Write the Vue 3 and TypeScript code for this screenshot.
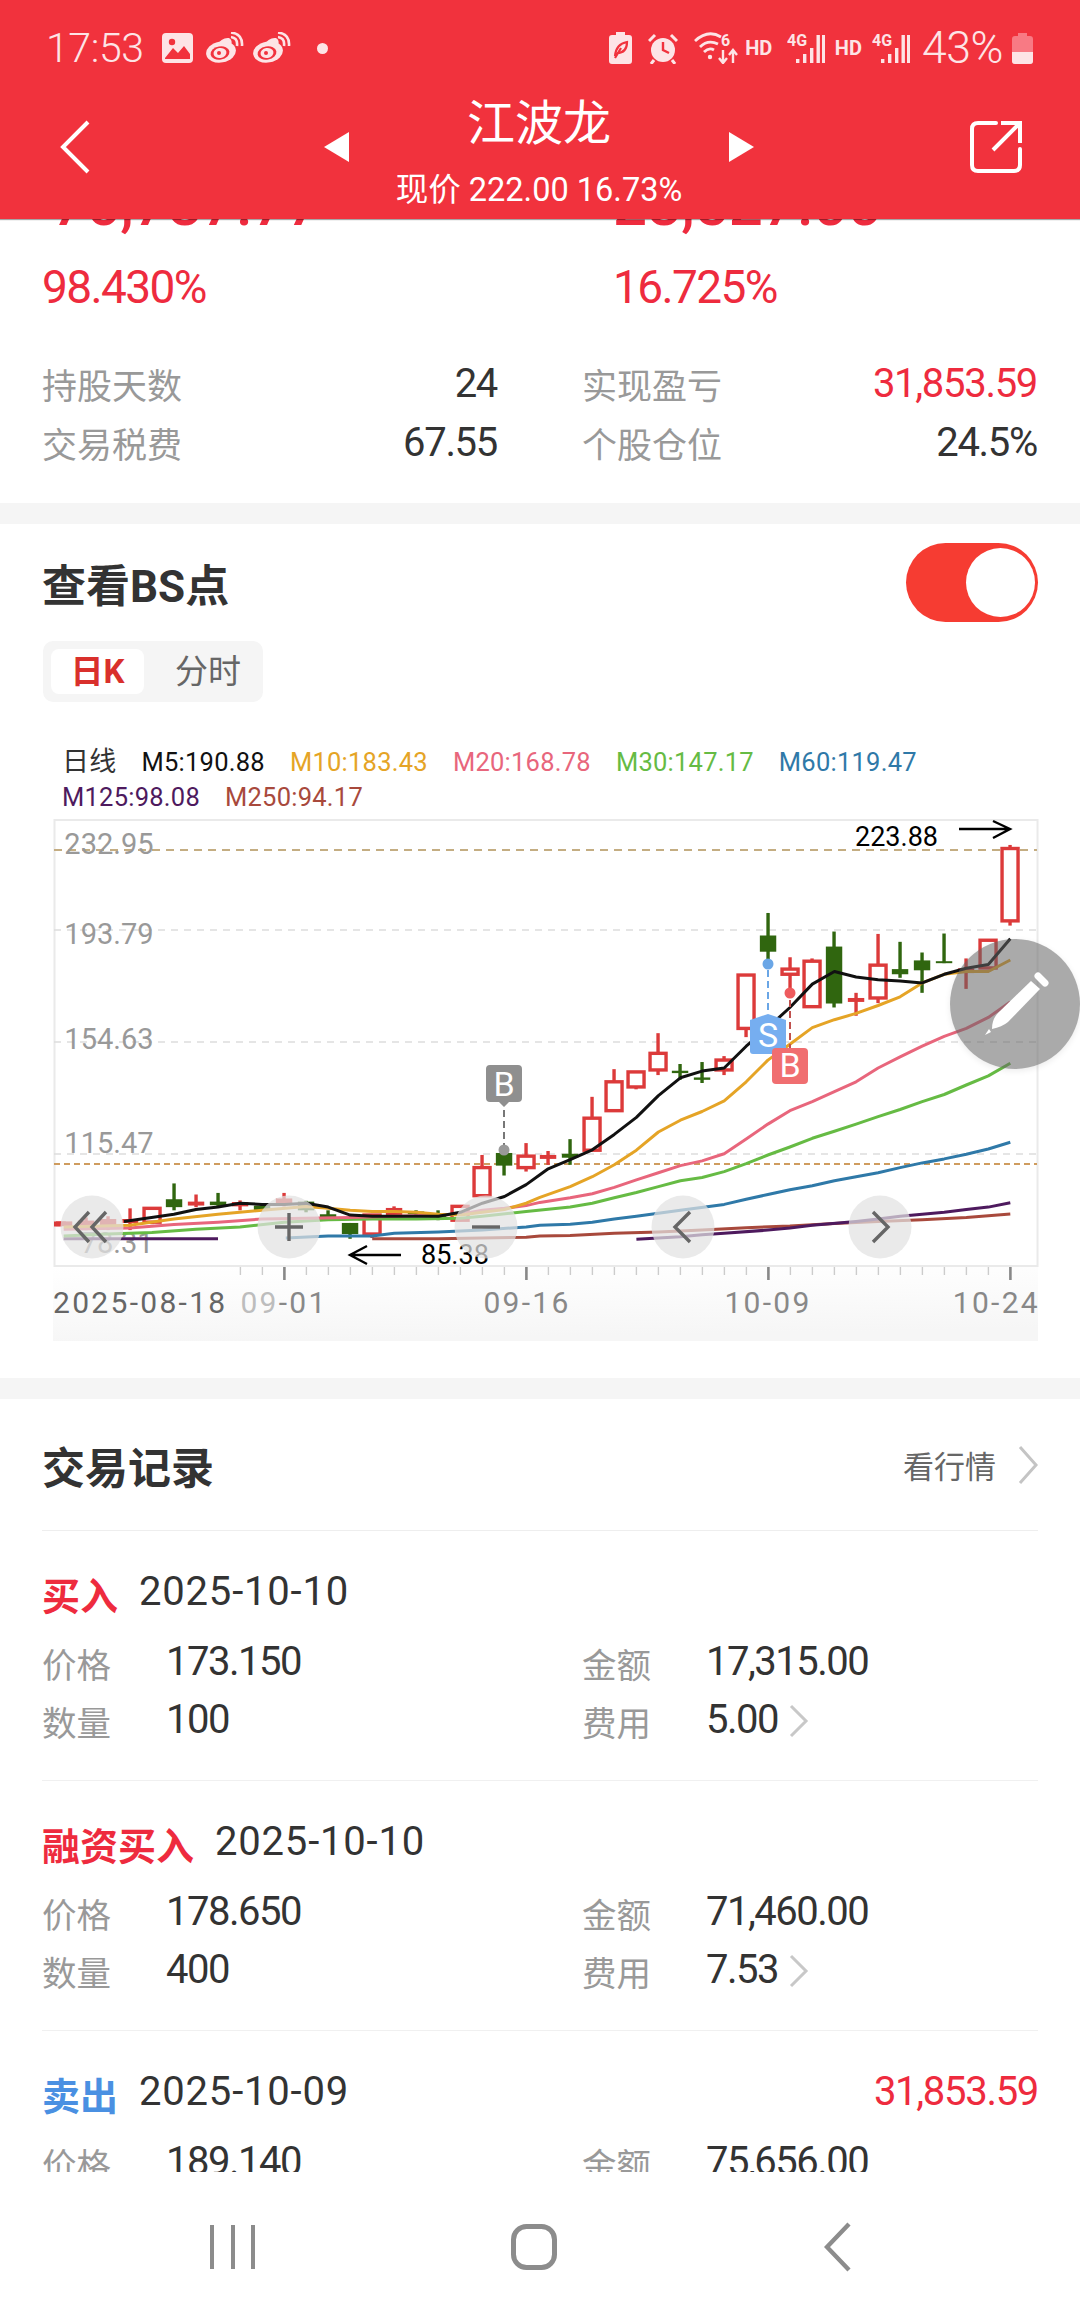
<template>
  <div class="phone">
    <header class="top">
      <div class="status">
        <span class="clock">17:53</span>
        <svg class="st-gallery" width="31" height="30" viewBox="0 0 31 30">
          <rect width="31" height="30" rx="4" fill="#fde4e6" />
          <circle cx="10" cy="9" r="3.2" fill="#f1323d" />
          <path d="M3 25 L11 15 L16 20 L22 13 L28 21 V26 H3 Z" fill="#f1323d" />
        </svg>
        <svg v-for="n in 2" :key="n" class="st-weibo" width="38" height="32" viewBox="0 0 38 32">
          <ellipse cx="15" cy="20" rx="15" ry="10.5" transform="rotate(-10 15 20)" fill="#fde4e6" />
          <path d="M10 14 Q16 5 23 6 Q27 8 25 14 Z" fill="#fde4e6" />
          <ellipse cx="14" cy="21" rx="9.5" ry="6.6" transform="rotate(-10 14 21)" fill="#f1323d" />
          <ellipse cx="14" cy="21" rx="6.5" ry="5" transform="rotate(-10 14 21)" fill="#fde4e6" />
          <circle cx="13" cy="21" r="2" fill="#f1323d" />
          <path d="M25 5 Q32 6 31 14 M25 0.5 Q37 2 36 14" fill="none" stroke="#fde4e6" stroke-width="2.6" />
        </svg>
        <i class="st-dot"></i>
        <span class="st-gap"></span>
        <svg width="23" height="32" viewBox="0 0 23 32">
          <path d="M7 0 H16 V3 H20 Q23 3 23 6 V29 Q23 32 20 32 H3 Q0 32 0 29 V6 Q0 3 3 3 H7 Z" fill="#fde4e6" />
          <path d="M6 24 Q7 12 18 10 Q18 21 8 21 M6 26 L12 16" fill="none" stroke="#f1323d" stroke-width="2.2" />
        </svg>
        <svg class="ml16" width="30" height="31" viewBox="0 0 30 31">
          <circle cx="15" cy="17" r="12" fill="#fde4e6" />
          <path d="M1 8 L7 2 M29 8 L23 2 M6 27 L3 31 M24 27 L27 31" stroke="#fde4e6" stroke-width="3" />
          <path d="M15 9 V17 L21 20" fill="none" stroke="#f1323d" stroke-width="2.4" />
        </svg>
        <svg class="ml16" width="44" height="32" viewBox="0 0 44 32">
          <path d="M1 9 Q14 -3 27 5 M6 15 Q14 7 24 12 M10 20 Q15 15 20 18" fill="none" stroke="#fde4e6" stroke-width="2.8" />
          <circle cx="16" cy="25" r="2.2" fill="#fde4e6" />
          <text x="27" y="14" class="st-mini">6</text>
          <path d="M29 18 V30 M25 26 L29 31 L33 26 M39 31 V19 M35 23 L39 18 L43 23" fill="none" stroke="#fde4e6" stroke-width="2.4" />
        </svg>
        <span class="st-hd hd-a">HD</span>
        <svg class="ml15" width="38" height="32" viewBox="0 0 38 32">
          <text x="0" y="14" class="st-mini">4G</text>
          <rect x="9" y="27" width="3.4" height="4" fill="#fde4e6" />
          <rect x="16" y="22" width="3.4" height="9" fill="#fde4e6" />
          <rect x="23" y="16" width="3.4" height="15" fill="#fde4e6" />
          <rect x="29.5" y="3" width="3.4" height="28" fill="#fde4e6" />
          <rect x="35" y="3" width="3" height="28" fill="#fde4e6" />
        </svg>
        <span class="st-hd hd-b">HD</span>
        <svg class="sig-b" width="38" height="32" viewBox="0 0 38 32">
          <text x="0" y="14" class="st-mini">4G</text>
          <rect x="9" y="27" width="3.4" height="4" fill="#fde4e6" />
          <rect x="16" y="22" width="3.4" height="9" fill="#fde4e6" />
          <rect x="23" y="16" width="3.4" height="15" fill="#fde4e6" />
          <rect x="29.5" y="3" width="3.4" height="28" fill="#fde4e6" />
          <rect x="35" y="3" width="3" height="28" fill="#fde4e6" />
        </svg>
        <span class="clock batt-pct">43%</span>
        <svg class="batt" width="21" height="31" viewBox="0 0 21 31">
          <path d="M6 0 H15 V3 H18 Q21 3 21 6 V28 Q21 31 18 31 H3 Q0 31 0 28 V6 Q0 3 3 3 H6 Z" fill="#f87a84" />
          <path d="M0 19 H21 V28 Q21 31 18 31 H3 Q0 31 0 28 Z" fill="#fde4e6" />
        </svg>
      </div>
      <div class="nav">
        <svg class="nav-icon" width="30" height="54" viewBox="0 0 30 54">
          <path d="M28 2 L3 27 L28 52" fill="none" stroke="#fff" stroke-width="4" />
        </svg>
        <div class="nav-center">
          <i class="tri tri-l"></i>
          <div class="nav-title">
            <div class="stock-name">江波龙</div>
            <div class="stock-sub">现价 222.00 16.73%</div>
          </div>
          <i class="tri tri-r"></i>
        </div>
        <svg class="nav-icon" width="54" height="54" viewBox="0 0 54 54">
          <path d="M27 3 H9 Q3 3 3 9 V45 Q3 51 9 51 H45 Q51 51 51 45 V29" fill="none" stroke="#fff" stroke-width="4" stroke-linecap="round" />
          <path d="M24 30 L50 4 M32 3 H51 V23" fill="none" stroke="#fff" stroke-width="4" />
        </svg>
      </div>
    </header>

    <main class="scroll">
      <section class="summary">
        <div class="clipped">
          <span class="big-num">76,787.77</span>
          <span class="big-num second">28,527.00</span>
        </div>
        <div class="pcts">
          <span class="pct">98.430%</span>
          <span class="pct second">16.725%</span>
        </div>
        <div class="stats">
          <div v-for="s in stats" :key="s.label" class="stat">
            <span class="stat-label">{{ s.label }}</span>
            <span class="num" :class="{ rise: s.rise }">{{ s.value }}</span>
          </div>
        </div>
      </section>
      <div class="band"></div>

      <section class="bs">
        <div class="bs-head">
          <h2 class="bs-title">查看BS点</h2>
          <div class="toggle"><i class="knob"></i></div>
        </div>
        <div class="tabs">
          <span class="tab active">日K</span>
          <span class="tab">分时</span>
        </div>
        <div class="legend">
          <span class="lg-name">日线</span>
          <span v-for="l in legendTop" :key="l.text" class="lg-item" :style="{ color: l.color }">{{ l.text }}</span>
          <div class="lg-break"></div>
          <span v-for="l in legendBottom" :key="l.text" class="lg-item" :style="{ color: l.color }">{{ l.text }}</span>
        </div>
        <svg class="plot" width="1080" height="522" viewBox="0 819 1080 522">
          <defs>
            <linearGradient id="fade" x1="0" y1="0" x2="0.22" y2="1">
              <stop offset="0" stop-color="#ffffff" />
              <stop offset="0.5" stop-color="#fbfbfb" />
              <stop offset="1" stop-color="#f6f6f6" />
            </linearGradient>
          </defs>
          <rect x="53" y="1266" width="985" height="75" fill="url(#fade)" />
          <rect x="54.5" y="820" width="983" height="446" fill="#fff" stroke="#eaeaea" stroke-width="2" />

          <line v-for="y in [930, 1042, 1154]" :key="y" x1="54" x2="1037" :y1="y" :y2="y" stroke="#ddd" stroke-width="1.4" stroke-dasharray="7 6" />
          <line x1="54" x2="1037" y1="850" y2="850" stroke="#c4ad82" stroke-width="2" stroke-dasharray="8 6" />
          <line x1="54" x2="1037" y1="1164" y2="1164" stroke="#cf9c5e" stroke-width="2" stroke-dasharray="6 4" />

          <text v-for="a in axisLabels" :key="a.text" x="153.5" :y="a.y" class="axis" text-anchor="end">{{ a.text }}</text>

          <line x1="54" x2="62" y1="1224" y2="1224" stroke="#dc3a3a" stroke-width="5" />
          <g v-for="(c, i) in candles" :key="i">
            <line :x1="c.x" :x2="c.x" :y1="c.wt" :y2="c.wb" :stroke="c.color" stroke-width="3.4" />
            <rect v-if="c.up" :x="c.x - 8" :y="c.t" width="16" :height="c.h" fill="#fff" :stroke="c.color" stroke-width="3.4" />
            <rect v-else :x="c.x - 8.2" :y="c.t" width="16.4" :height="c.h" :fill="c.color" />
          </g>

          <polyline v-for="m in maLines" :key="m.color + m.points.length" :points="m.points" fill="none" :stroke="m.color" stroke-width="3" stroke-linejoin="round" />

          <line x1="504" x2="504" y1="1110" y2="1146" stroke="#777" stroke-width="2" stroke-dasharray="7 4" />
          <circle cx="504" cy="1150" r="5.5" fill="#999" />
          <path d="M490 1065 H518 Q522 1065 522 1069 V1098 Q522 1102 518 1102 H509 L504 1107 L499 1102 H490 Q486 1102 486 1098 V1069 Q486 1065 490 1065 Z" fill="#8f8f8f" />
          <text x="504" y="1096" class="tag" text-anchor="middle">B</text>

          <line x1="768" x2="768" y1="970" y2="1014" stroke="#6aa6e6" stroke-width="2" stroke-dasharray="7 4" />
          <circle cx="768" cy="964" r="5.5" fill="#6aa6e6" />
          <line x1="790" x2="790" y1="1000" y2="1048" stroke="#c0504d" stroke-width="2" stroke-dasharray="7 4" />
          <circle cx="790" cy="993" r="5.5" fill="#ee5b5e" />
          <path d="M750 1020 L768 1014 L786 1020 V1051 Q786 1054 783 1054 H753 Q750 1054 750 1051 Z" fill="#76aef0" />
          <text x="768" y="1047" class="tag" text-anchor="middle">S</text>
          <rect x="772" y="1048" width="36" height="36" rx="4" fill="#f06e70" />
          <text x="790" y="1077" class="tag" text-anchor="middle">B</text>

          <text x="938" y="846" class="extreme" text-anchor="end">223.88</text>
          <path d="M959 829 H1009 M993 821 L1010 829 L993 838" fill="none" stroke="#000" stroke-width="2.4" />
          <path d="M401 1255 H350 M367 1246 L350 1255 L367 1264" fill="none" stroke="#000" stroke-width="2.4" />
          <text x="421" y="1264" class="extreme">85.38</text>

          <g v-for="b in chartButtons" :key="b.x">
            <circle :cx="b.x" cy="1227" r="31.5" fill="#e2e2e2" fill-opacity="0.72" />
            <path :d="b.d" :transform="`translate(${b.x} 1227)`" fill="none" stroke="#666" stroke-width="3.4" />
          </g>

          <line v-for="t in ticks" :key="t.x" :x1="t.x" :x2="t.x" y1="1267" :y2="t.major ? 1280 : 1275" :stroke="t.major ? '#888' : '#ccc'" :stroke-width="t.major ? 2.6 : 1.4" />

          <text x="53" y="1313" class="axis-date first">2025-08-18</text>
          <text x="284" y="1313" class="axis-date" text-anchor="middle"><tspan fill="#bdbdbd">09</tspan>-01</text>
          <text x="527" y="1313" class="axis-date" text-anchor="middle">09-16</text>
          <text x="768" y="1313" class="axis-date" text-anchor="middle">10-09</text>
          <text x="1040" y="1313" class="axis-date" text-anchor="end">10-24</text>
        </svg>
      </section>
      <div class="band"></div>

      <section class="trades">
        <div class="trades-head">
          <h2 class="trades-title">交易记录</h2>
          <div class="quote-link">
            <span>看行情</span>
            <svg width="20" height="40" viewBox="0 0 20 40">
              <path d="M2 2 L18 20 L2 38" fill="none" stroke="#c4c4c4" stroke-width="3" />
            </svg>
          </div>
        </div>
        <div v-for="t in trades" :key="t.kind + t.price" class="trade">
          <div class="trade-head">
            <span class="trade-kind" :class="t.side">{{ t.kind }}</span>
            <span class="trade-date">{{ t.date }}</span>
            <span v-if="t.profit" class="trade-profit">{{ t.profit }}</span>
          </div>
          <div class="trade-grid">
            <div class="cell"><span class="cell-label">价格</span><span class="cell-value">{{ t.price }}</span></div>
            <div class="cell"><span class="cell-label">金额</span><span class="cell-value">{{ t.amount }}</span></div>
            <div class="cell"><span class="cell-label">数量</span><span class="cell-value">{{ t.qty }}</span></div>
            <div class="cell">
              <span class="cell-label">费用</span><span class="cell-value">{{ t.fee }}</span>
              <svg class="fee-arrow" width="20" height="34" viewBox="0 0 20 34">
                <path d="M2 2 L17 17 L2 32" fill="none" stroke="#c8c8c8" stroke-width="3" />
              </svg>
            </div>
          </div>
        </div>
      </section>
    </main>

    <footer class="sys-nav">
      <svg width="46" height="46" viewBox="0 0 46 46">
        <path d="M2 1 V45 M23 1 V45 M43 1 V45" fill="none" stroke="#8c8c8c" stroke-width="4" />
      </svg>
      <svg width="46" height="46" viewBox="0 0 46 46">
        <rect x="2.5" y="2.5" width="41" height="41" rx="13" fill="none" stroke="#8c8c8c" stroke-width="5" />
      </svg>
      <svg width="28" height="50" viewBox="0 0 28 50">
        <path d="M25 2 L3 25 L25 48" fill="none" stroke="#8c8c8c" stroke-width="4.4" />
      </svg>
    </footer>

    <button class="fab">
      <svg width="130" height="130" viewBox="0 0 130 130">
        <path d="M81 42 L90 50 L58 83 Q52 88 42 90 Q42 80 48 74 Z" fill="#fff" />
        <path d="M35 96 L39 90 L41 93 Z" fill="#fff" />
        <line x1="88" y1="37" x2="95" y2="44" stroke="#fff" stroke-width="7" stroke-linecap="round" />
      </svg>
    </button>
  </div>
</template>

<script setup lang="ts">
// reference was measured on a zoomed crop, these bring it back to page pixels
const zx = (z: number) => z / 2.904
const zy = (z: number) => 720 + z / 2.529

const stats = [
  { label: '持股天数', value: '24' },
  { label: '实现盈亏', value: '31,853.59', rise: true },
  { label: '交易税费', value: '67.55' },
  { label: '个股仓位', value: '24.5%' },
]

const legendTop = [
  { text: 'M5:190.88', color: '#111' },
  { text: 'M10:183.43', color: '#e5a426' },
  { text: 'M20:168.78', color: '#e8667c' },
  { text: 'M30:147.17', color: '#66bb44' },
  { text: 'M60:119.47', color: '#2f79a8' },
]
const legendBottom = [
  { text: 'M125:98.08', color: '#4e1a5e' },
  { text: 'M250:94.17', color: '#a8493c' },
]

const axisLabels = [
  { text: '232.95', y: 854 },
  { text: '193.79', y: 944 },
  { text: '154.63', y: 1049 },
  { text: '115.47', y: 1153 },
  { text: '78.31', y: 1253 },
]

// body top, body bottom, wick top, wick bottom, r/g/h (h = hollow red)
const rawCandles: [number, number, number, number, string][] = [
  [1268, 1280, 1268, 1280, 'r'], [1266, 1284, 1258, 1290, 'r'], [1262, 1285, 1255, 1290, 'r'],
  [1262, 1272, 1235, 1290, 'r'], [1235, 1270, 1235, 1275, 'h'], [1212, 1232, 1172, 1240, 'g'],
  [1218, 1228, 1200, 1232, 'r'], [1218, 1227, 1196, 1232, 'g'], [1219, 1230, 1215, 1240, 'r'],
  [1228, 1240, 1222, 1242, 'g'], [1210, 1222, 1196, 1230, 'r'], [1218, 1240, 1216, 1245, 'g'],
  [1250, 1262, 1240, 1265, 'g'], [1272, 1300, 1272, 1312, 'g'], [1252, 1300, 1252, 1310, 'h'],
  [1234, 1252, 1230, 1256, 'r'], [1243, 1250, 1240, 1255, 'g'], [1250, 1258, 1240, 1265, 'g'],
  [1230, 1265, 1228, 1268, 'h'], [1132, 1203, 1100, 1203, 'h'], [1095, 1127, 1075, 1152, 'g'],
  [1103, 1132, 1070, 1142, 'h'], [1100, 1110, 1090, 1125, 'r'], [1097, 1107, 1060, 1125, 'g'],
  [1007, 1088, 953, 1088, 'h'], [915, 988, 883, 988, 'h'], [890, 928, 890, 934, 'h'],
  [843, 885, 792, 898, 'h'], [887, 893, 870, 910, 'g'], [904, 910, 865, 918, 'g'],
  [860, 885, 850, 898, 'h'], [645, 780, 645, 802, 'h'], [545, 586, 488, 620, 'g'],
  [630, 643, 600, 680, 'h'], [610, 725, 603, 725, 'h'], [573, 717, 535, 727, 'g'],
  [703, 713, 690, 748, 'r'], [620, 703, 541, 716, 'h'], [630, 643, 561, 652, 'g'],
  [608, 633, 588, 690, 'g'], [610, 615, 540, 615, 'g'], [628, 640, 603, 680, 'r'],
  [557, 627, 555, 630, 'h'], [325, 508, 316, 520, 'h'],
]

const candles = rawCandles.map(([t, b, wt, wb, kind], i) => ({
  x: 64.05 + 22 * i,
  t: zy(t),
  h: zy(b) - zy(t),
  wt: zy(wt),
  wb: zy(wb),
  up: kind === 'h',
  color: kind === 'g' ? '#30660f' : '#dc3a3a',
}))

// polylines: pairs of left crop points, then pairs of right crop points (offset by one crop width)
function line(left: number[], right: number[]) {
  const pts: string[] = []
  for (let i = 0; i < left.length; i += 2) pts.push(`${zx(left[i]).toFixed(1)},${zy(left[i + 1]).toFixed(1)}`)
  for (let i = 0; i < right.length; i += 2) pts.push(`${zx(right[i] + 1568).toFixed(1)},${zy(right[i + 1]).toFixed(1)}`)
  return pts.join(' ')
}

const maLines = [
  {
    color: '#a8493c',
    points: line([1081, 1312, 1273, 1312, 1528, 1308], [0, 1305, 88, 1304, 216, 1298, 344, 1295, 471, 1290, 599, 1284, 726, 1280, 855, 1273, 982, 1268, 1110, 1264, 1238, 1258, 1366, 1249]),
  },
  { color: '#4e1a5e', points: line([185, 1312, 633, 1312], []) },
  {
    color: '#4e1a5e',
    points: line([], [280, 1313, 408, 1307, 471, 1302, 535, 1298, 662, 1290, 726, 1285, 791, 1278, 918, 1268, 982, 1262, 1046, 1255, 1110, 1250, 1174, 1245, 1238, 1238, 1302, 1232, 1366, 1221]),
  },
  {
    color: '#2f79a8',
    points: line([830, 1310, 953, 1305, 1081, 1305, 1145, 1298, 1273, 1295, 1401, 1290, 1528, 1282], [0, 1278, 88, 1275, 152, 1270, 216, 1262, 280, 1255, 408, 1240, 535, 1225, 599, 1212, 662, 1200, 726, 1188, 791, 1178, 855, 1165, 918, 1155, 982, 1145, 1046, 1132, 1110, 1120, 1174, 1110, 1238, 1098, 1302, 1085, 1366, 1068]),
  },
  {
    color: '#66bb44',
    points: line([185, 1305, 313, 1300, 441, 1296, 569, 1288, 697, 1282, 825, 1270, 953, 1264, 1081, 1262, 1209, 1262, 1337, 1260, 1401, 1255, 1528, 1243], [88, 1232, 152, 1222, 216, 1208, 280, 1195, 344, 1180, 408, 1165, 471, 1157, 535, 1142, 599, 1122, 662, 1100, 726, 1080, 791, 1058, 855, 1040, 918, 1022, 982, 1003, 1046, 985, 1110, 965, 1174, 947, 1238, 923, 1302, 900, 1366, 868]),
  },
  {
    color: '#e8667c',
    points: line([185, 1288, 377, 1285, 505, 1276, 633, 1270, 761, 1262, 889, 1260, 1017, 1258, 1145, 1255, 1273, 1252, 1337, 1250, 1401, 1240, 1465, 1235, 1528, 1228], [0, 1220, 88, 1208, 152, 1198, 216, 1182, 280, 1163, 344, 1145, 408, 1127, 471, 1115, 535, 1097, 599, 1060, 662, 1022, 726, 988, 791, 965, 855, 940, 918, 915, 982, 880, 1046, 852, 1110, 825, 1174, 800, 1238, 780, 1302, 752, 1366, 713]),
  },
  {
    color: '#e5a426',
    points: line([185, 1282, 377, 1278, 505, 1262, 633, 1250, 761, 1240, 889, 1230, 953, 1235, 1017, 1240, 1081, 1243, 1145, 1243, 1209, 1245, 1273, 1250, 1337, 1252, 1401, 1245, 1465, 1238, 1528, 1222], [0, 1207, 88, 1180, 152, 1155, 216, 1125, 280, 1088, 344, 1042, 408, 1012, 471, 990, 535, 963, 599, 915, 662, 860, 726, 820, 791, 778, 855, 758, 918, 742, 982, 722, 1046, 700, 1110, 665, 1174, 643, 1238, 636, 1302, 636, 1366, 607]),
  },
  {
    color: '#111',
    points: line([360, 1268, 505, 1250, 569, 1238, 633, 1232, 697, 1222, 761, 1225, 825, 1225, 889, 1222, 953, 1232, 1017, 1252, 1081, 1255, 1273, 1255, 1337, 1245, 1401, 1222, 1465, 1205, 1528, 1175], [0, 1150, 24, 1135, 88, 1112, 152, 1087, 216, 1048, 280, 1005, 344, 950, 408, 905, 471, 888, 535, 880, 599, 825, 662, 778, 726, 727, 791, 668, 855, 636, 918, 650, 982, 657, 1046, 660, 1110, 665, 1174, 643, 1238, 628, 1302, 618, 1366, 553]),
  },
]

const chartButtons = [
  { x: 92, d: 'M-3 -15 L-17 0 L-3 15 M14 -15 L0 0 L14 15' },
  { x: 289, d: 'M-14 0 H14 M0 -14 V14' },
  { x: 486, d: 'M-14 0 H14' },
  { x: 683, d: 'M7 -15 L-8 0 L7 15' },
  { x: 880, d: 'M-7 -15 L8 0 L-7 15' },
]

const ticks = Array.from({ length: 36 }, (_, i) => ({
  x: 240.4 + 22 * i,
  major: (i - 2) % 11 === 0,
}))

const trades = [
  { kind: '买入', side: 'buy', date: '2025-10-10', price: '173.150', amount: '17,315.00', qty: '100', fee: '5.00' },
  { kind: '融资买入', side: 'buy', date: '2025-10-10', price: '178.650', amount: '71,460.00', qty: '400', fee: '7.53' },
  { kind: '卖出', side: 'sell', date: '2025-10-09', profit: '31,853.59', price: '189.140', amount: '75,656.00', qty: '400', fee: '55.02' },
]
</script>

<style>
html, body { margin: 0; background: #fff; }
</style>

<style scoped>
.phone {
  position: relative;
  width: 1080px;
  height: 2316px;
  display: flex;
  flex-direction: column;
  overflow: hidden;
  background: #fff;
  font-family: Roboto, "Noto Sans CJK SC", sans-serif;
  color: #333;
}
.top {
  height: 219px;
  flex: none;
  background: #f1323d;
  color: #fff;
  box-shadow: 0 1px 1px rgba(0,0,0,0.35);
  position: relative;
  z-index: 2;
}
.status {
  height: 96px;
  padding: 0 47px 0 46px;
  display: flex;
  align-items: center;
  color: #fde4e6;
}
.clock { font-size: 41px; font-weight: 300; letter-spacing: -0.4px; line-height: 1; }
.st-gallery { margin-left: 18px; }
.st-weibo { margin-left: 13px; }
.st-weibo + .st-weibo { margin-left: 9px; }
.st-dot { width: 11px; height: 11px; border-radius: 50%; background: #fde4e6; margin-left: 26px; }
.st-gap { flex: 1; }
.st-mini { font: 700 16px Roboto, sans-serif; fill: #fde4e6; }
.st-hd { font-size: 20px; font-weight: 700; }
.hd-a { margin-left: 7.5px; }
.hd-b { margin-left: 9.5px; }
.sig-b { margin-left: 10px; }
.ml15 { margin-left: 15px; }
.ml16 { margin-left: 16px; }
.batt-pct { margin-left: 12px; font-size: 44.5px; }
.batt { margin-left: 9px; }
.nav {
  height: 123px;
  padding: 0 57px 0 60px;
  display: flex;
  align-items: flex-start;
  justify-content: space-between;
}
.nav-icon { margin-top: 24px; }
.nav-center {
  width: 430px;
  margin-left: 19px;
  display: flex;
  justify-content: space-between;
  align-items: flex-start;
}
.tri { width: 25px; height: 30px; background: #fff; margin-top: 36px; }
.tri-l { clip-path: polygon(100% 0, 100% 100%, 0 50%); }
.tri-r { clip-path: polygon(0 0, 100% 50%, 0 100%); }
.nav-title { display: flex; flex-direction: column; align-items: center; }
.stock-name { font-size: 48px; line-height: 54px; margin-top: 1px; }
.stock-sub { font-size: 32.5px; line-height: 48px; margin-top: 15px; white-space: nowrap; }

.scroll { height: 1953px; flex: none; overflow: hidden; }
.summary { height: 284px; padding: 0 42px; box-sizing: border-box; }
.clipped { height: 16px; overflow: hidden; display: flex; position: relative; }
.big-num {
  font-size: 60px;
  line-height: 60px;
  margin-top: -44px;
  color: #ee2b3e;
  font-weight: 500;
  white-space: nowrap;
  height: 60px;
  margin-left: 10px;
}
.big-num.second { position: absolute; left: 561px; margin-left: 10px; }
.pcts { height: 104px; display: flex; align-items: center; }
.pct { font-size: 46px; color: #ee2b3e; width: 571px; letter-spacing: -1.6px; }
.pct.second { width: auto; }
.stats {
  padding-top: 17.5px;
  display: grid;
  grid-template-columns: 455px 455px;
  column-gap: 85px;
}
.stat { height: 59px; display: flex; align-items: center; justify-content: space-between; }
.stat-label { font-size: 35px; color: #999; line-height: 1; margin-top: 3px; }
.num { font-size: 40px; color: #333; line-height: 1; margin-top: -5px; letter-spacing: -1.3px; }
.num.rise { color: #ee2b3e; }
.band { height: 21px; background: #f5f5f5; }

.bs { padding-top: 19px; padding-bottom: 37px; }
.bs-head { height: 79px; padding: 0 42px; display: flex; justify-content: space-between; align-items: center; }
.bs-title { margin: 0; font-size: 44px; font-weight: 700; color: #333; }
.toggle { width: 132px; height: 79px; border-radius: 40px; background: #f63c32; position: relative; }
.knob {
  position: absolute;
  right: 3px;
  top: 5px;
  width: 69px;
  height: 69px;
  border-radius: 50%;
  background: #fff;
}
.tabs {
  width: 220px;
  height: 61px;
  margin: 19px 0 0 43px;
  background: #f5f5f5;
  border-radius: 10px;
  display: flex;
  align-items: center;
  padding-left: 8px;
  box-sizing: border-box;
}
.tab { font-size: 33px; color: #666; line-height: 45px; }
.tab.active {
  width: 93px;
  height: 45px;
  margin-right: 31px;
  text-align: center;
  background: #fff;
  color: #d9302c;
  font-weight: 700;
  border-radius: 8px;
}
.legend {
  margin-top: 42.5px;
  height: 70px;
  padding-left: 62px;
  display: flex;
  flex-wrap: wrap;
  align-items: center;
  font-size: 25.5px;
  letter-spacing: 0.25px;
  line-height: 35px;
  white-space: nowrap;
}
.lg-name { width: 79.5px; color: #333; font-size: 27px; }
.lg-item { margin-right: 25px; }
.lg-break { width: 100%; height: 0; }
.plot { display: block; margin-top: 4.5px; }
.axis { font: 400 29px Roboto, sans-serif; fill: #999; }
.tag { font: 400 34px Roboto, sans-serif; fill: #fff; }
.extreme { font: 400 27px Roboto, sans-serif; fill: #000; }
.axis-date { font: 400 30px Roboto, sans-serif; fill: #888; letter-spacing: 2.3px; }
.axis-date.first { fill: #666; }

.trades { padding: 0 42px; }
.trades-head {
  height: 131px;
  display: flex;
  align-items: center;
  justify-content: space-between;
  border-bottom: 1px solid #eee;
}
.trades-title { margin: 0; font-size: 43px; font-weight: 700; color: #333; }
.quote-link { display: flex; align-items: center; gap: 22px; font-size: 31px; color: #666; }
.trade { height: 250px; box-sizing: border-box; padding-top: 34px; border-bottom: 1px solid #f0f0f0; }
.trade-head { height: 60px; display: flex; align-items: center; }
.trade-kind { font-size: 38px; font-weight: 700; line-height: 1; margin-right: 21px; margin-top: 4px; }
.trade-kind.buy { color: #ee2b3e; }
.trade-kind.sell { color: #4a90e2; }
.trade-date { font-size: 40px; letter-spacing: 0.8px; color: #333; line-height: 1; margin-top: -6px; }
.trade-profit { margin-left: auto; font-size: 40px; letter-spacing: -1.3px; color: #ee2b3e; line-height: 1; margin-top: -6px; }
.trade-grid {
  margin-top: 9px;
  display: grid;
  grid-template-columns: 540px 1fr;
  grid-auto-rows: 58px;
}
.cell { display: flex; align-items: center; }
.cell-label { width: 124px; font-size: 34.5px; color: #999; line-height: 1; margin-top: 6px; }
.cell-value { font-size: 40px; letter-spacing: -1.5px; color: #333; line-height: 1; margin-top: -2px; }
.fee-arrow { margin-left: 11px; }

.sys-nav {
  height: 144px;
  padding-top: 6px;
  box-sizing: border-box;
  flex: none;
  background: #fff;
  position: relative;
  z-index: 2;
  display: grid;
  grid-template-columns: 466px 136px 472px;
  justify-items: center;
  align-items: center;
}
.fab {
  position: absolute;
  left: 950px;
  top: 939px;
  width: 130px;
  height: 130px;
  padding: 0;
  border: 0;
  border-radius: 50%;
  background: rgba(100,100,100,0.55);
  box-shadow: 0 2px 6px rgba(0,0,0,0.08);
}
.fab svg { display: block; }
</style>
